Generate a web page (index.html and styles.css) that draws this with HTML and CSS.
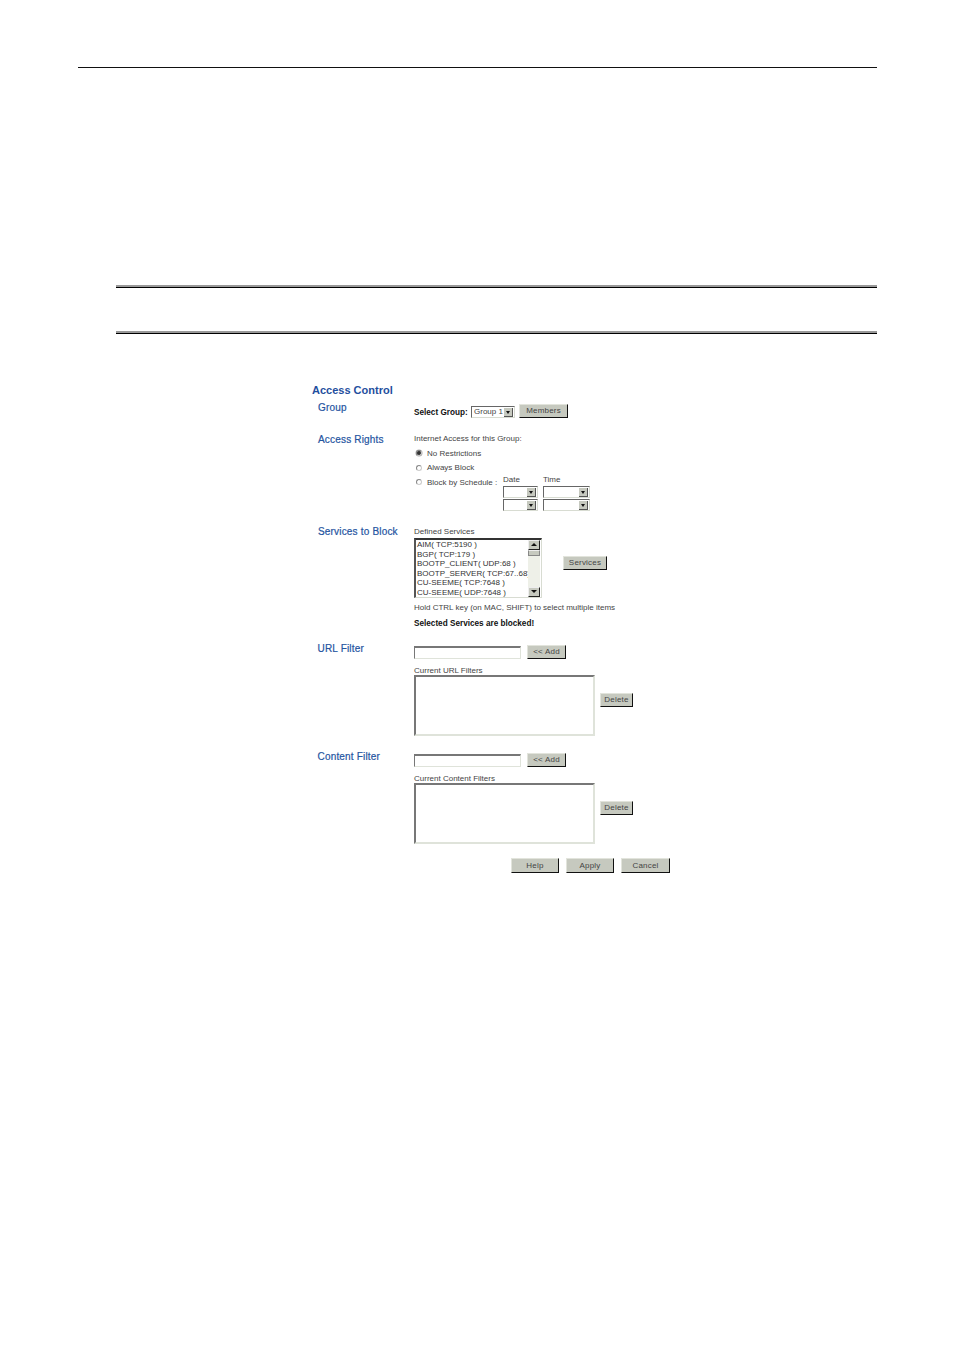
FILE: index.html
```html
<!DOCTYPE html>
<html lang="en">
<head>
<meta charset="utf-8">
<title>Access Control</title>
<link rel="stylesheet" href="styles.css">
</head>
<body>
<div class="page">
  <hr class="top-rule">
  <div class="note">
    <div class="note-rule"></div>
    <div class="note-rule"></div>
  </div>
  <main class="shot">
    <h1 class="title">Access Control</h1>

    <section class="sec sec-group">
      <h2 class="label">Group</h2>
      <div class="body group-row">
        <b class="select-label">Select Group:</b>
        <div class="select sel-group"><span>Group 1</span><i class="arrow"></i></div>
        <button class="btn btn-members">Members</button>
      </div>
    </section>

    <section class="sec sec-rights">
      <h2 class="label">Access Rights</h2>
      <div class="body">
        <p class="line intro">Internet Access for this Group:</p>
        <div class="radio-row"><i class="radio on"></i><span>No Restrictions</span></div>
        <div class="radio-row r2"><i class="radio"></i><span>Always Block</span></div>
        <div class="schedule">
          <div class="radio-row sched-label"><i class="radio"></i><span>Block by Schedule :</span></div>
          <div class="sched-col date">
            <span class="col-head">Date</span>
            <div class="select sel-date"><i class="arrow"></i></div>
            <div class="select sel-date"><i class="arrow"></i></div>
          </div>
          <div class="sched-col time">
            <span class="col-head">Time</span>
            <div class="select sel-time"><i class="arrow"></i></div>
            <div class="select sel-time"><i class="arrow"></i></div>
          </div>
        </div>
      </div>
    </section>

    <section class="sec sec-services">
      <h2 class="label">Services to Block</h2>
      <div class="body">
        <p class="line defined">Defined Services</p>
        <div class="list-row">
          <div class="listbox">
            <ul class="items">
              <li>AIM( TCP:5190 )</li>
              <li>BGP( TCP:179 )</li>
              <li>BOOTP_CLIENT( UDP:68 )</li>
              <li>BOOTP_SERVER( TCP:67..68)</li>
              <li>CU-SEEME( TCP:7648 )</li>
              <li>CU-SEEME( UDP:7648 )</li>
            </ul>
            <div class="scrollbar">
              <i class="sb-btn up"></i>
              <i class="sb-thumb"></i>
              <i class="sb-track"></i>
              <i class="sb-btn down"></i>
            </div>
          </div>
          <button class="btn btn-services">Services</button>
        </div>
        <p class="line hold">Hold CTRL key (on MAC, SHIFT) to select multiple items</p>
        <p class="line blocked"><b>Selected Services are blocked!</b></p>
      </div>
    </section>

    <section class="sec sec-filter">
      <h2 class="label">URL Filter</h2>
      <div class="body">
        <div class="add-row">
          <div class="field"></div>
          <button class="btn btn-add">&lt;&lt; Add</button>
        </div>
        <p class="line current">Current URL Filters</p>
        <div class="area-row">
          <div class="area"></div>
          <button class="btn btn-delete">Delete</button>
        </div>
      </div>
    </section>

    <section class="sec sec-filter">
      <h2 class="label">Content Filter</h2>
      <div class="body">
        <div class="add-row">
          <div class="field"></div>
          <button class="btn btn-add">&lt;&lt; Add</button>
        </div>
        <p class="line current">Current Content Filters</p>
        <div class="area-row">
          <div class="area"></div>
          <button class="btn btn-delete">Delete</button>
        </div>
      </div>
    </section>

    <div class="actions">
      <button class="btn btn-action">Help</button>
      <button class="btn btn-action">Apply</button>
      <button class="btn btn-action">Cancel</button>
    </div>
  </main>
</div>
</body>
</html>
```

FILE: styles.css
```css
* { box-sizing: border-box; }
html, body { margin: 0; padding: 0; background: #fff; }
body { font-family: "Liberation Sans", Arial, sans-serif; color: #444; font-size: 8px; }
p, h1, h2, ul { margin: 0; padding: 0; }
.page { height: 1351px; padding: 67px 77px 0 78px; overflow: hidden; }
.top-rule { margin: 0; border: 0; height: 1px; background: #111; }
.note {
  display: flex;
  flex-direction: column;
  justify-content: space-between;
  margin: 217px 0 0 38px;
  height: 49px;
}
.note-rule { height: 3px; border-top: 2px solid #999; border-bottom: 1px solid #000; }
.shot { margin: 49px 0 0 234px; width: 400px; }
.title { font-size: 11px; line-height: 14px; font-weight: 700; color: #1f4f9e; height: 17px; }
.sec { display: grid; grid-template-columns: 102px 1fr; }
.label { font-size: 10px; line-height: 14px; padding-top: 1px; font-weight: 400; color: #24549f; padding-left: 6px; letter-spacing: 0.18px; -webkit-text-stroke: 0.2px #24549f; white-space: nowrap; }
.sec-group { height: 32px; }
.sec-rights { height: 92px; }
.sec-services { height: 117px; }
.sec-filter { height: 108px; }
.sec-filter .label { padding-left: 5.5px; }
.line { line-height: 14px; white-space: nowrap; }
b { font-weight: 700; color: #111; font-size: 8.2px; }

.group-row { display: flex; align-items: flex-end; height: 18px; padding-top: 4px; }
.select-label { width: 57px; line-height: 12px; margin-bottom: -1px; white-space: nowrap; }
.select {
  display: flex;
  align-items: center;
  justify-content: flex-end;
  background: #fff;
  border-top: 1px solid #666;
  border-left: 1px solid #666;
  border-right: 1px solid #d8dcd2;
  border-bottom: 1px solid #d8dcd2;
  padding: 0 1px 0 0;
}
.select span { flex: 1; padding-left: 2px; line-height: 10px; white-space: nowrap; }
.sel-group { width: 44px; height: 12px; margin-right: 4px; }
.sel-date { width: 35px; height: 12px; }
.sel-time { width: 47px; height: 12px; }
.arrow {
  display: block;
  flex: none;
  width: 9px;
  height: 9px;
  background: #c6c9bf;
  border-right: 1px solid #555;
  border-bottom: 1px solid #555;
  position: relative;
}
.arrow::after {
  content: "";
  position: absolute;
  left: 1.5px;
  top: 3px;
  border-left: 2.5px solid transparent;
  border-right: 2.5px solid transparent;
  border-top: 3px solid #111;
}
.btn {
  display: block;
  margin: 0;
  padding: 0;
  font: 8px/1 "Liberation Sans", Arial, sans-serif;
  color: #444;
  background-color: #c6c9bf;
  background-image: radial-gradient(#b6b9ae 35%, transparent 40%);
  background-size: 2px 2px;
  border: 0;
  border-top: 1px solid #e2e4dc;
  border-left: 1px solid #e2e4dc;
  border-right: 1px solid #111;
  border-bottom: 1px solid #111;
  letter-spacing: 0.2px;
}
.btn-members { width: 49px; height: 14px; }

.intro { height: 14px; }
.radio-row { display: flex; align-items: center; height: 14px; padding-left: 2px; }
.radio-row span { margin-left: 5px; white-space: nowrap; }
.r2 { margin-top: 0.5px; }
.radio {
  display: block;
  flex: none;
  width: 6px;
  height: 6px;
  border-radius: 50%;
  border: 1px solid #888;
  border-right-color: #ccc;
  border-bottom-color: #ccc;
  background: #fff;
}
.radio.on { background: #333; box-shadow: 0 0 0 0.5px #aaa; }
.schedule { display: flex; margin-top: 0.5px; }
.sched-label { width: 89px; height: 14px; }
.sched-col { display: flex; flex-direction: column; }
.date { margin-right: 5px; }
.col-head { line-height: 10px; height: 11px; }
.sched-col .select + .select { margin-top: 1px; }

.defined { height: 13px; padding-top: 2px; line-height: 10px; margin-top: 1px; }
.list-row { display: flex; align-items: flex-start; }
.listbox {
  display: flex;
  width: 128px;
  height: 60px;
  background: #fff;
  border-top: 2px solid #333;
  border-left: 2px solid #555;
  border-right: 1px solid #d8dcd2;
  border-bottom: 1px solid #d8dcd2;
}
.items { flex: 1; list-style: none; padding: 0 0 0 1px; min-width: 0; }
.items li { line-height: 9.6px; white-space: nowrap; color: #333; }
.scrollbar { display: flex; flex-direction: column; width: 12px; margin: 0 1px 0 0; flex: none; }
.sb-btn {
  display: block;
  height: 10px;
  background: #c6c9bf;
  border-right: 1px solid #222;
  border-bottom: 1px solid #222;
  border-top: 1px solid #eee;
  border-left: 1px solid #eee;
  position: relative;
}
.sb-btn::after {
  content: "";
  position: absolute;
  left: 2px;
  top: 2px;
  border-left: 3px solid transparent;
  border-right: 3px solid transparent;
}
.sb-btn.up::after { border-bottom: 3px solid #111; }
.sb-btn.down::after { border-top: 3px solid #111; }
.sb-thumb { display: block; height: 6px; background: #c6c9bf; border: 1px solid #888; border-top-color: #eee; }
.sb-track {
  display: block;
  flex: 1;
  background-color: #eef0e8;
  background-image: radial-gradient(#c2c5ba 35%, transparent 40%);
  background-size: 2px 2px;
}
.btn-services { width: 44px; height: 14px; margin: 18px 0 0 21px; }
.hold { margin-top: 3px; }
.blocked { margin-top: 2px; }

.add-row { display: flex; align-items: flex-start; padding-top: 4px; }
.field {
  width: 107px;
  height: 13px;
  margin: 1px 6px 0 0;
  background: #fff;
  border-top: 2px solid #777;
  border-left: 1px solid #777;
  border-right: 1px solid #dfe3da;
  border-bottom: 1px solid #dfe3da;
}
.btn-add { width: 39px; height: 14px; }
.current { margin-top: 5px; line-height: 11px; height: 11px; padding-top: 1px; }
.area-row { display: flex; align-items: flex-start; }
.area {
  width: 181px;
  height: 61px;
  background: #fff;
  border-top: 2px solid #777;
  border-left: 2px solid #777;
  border-right: 2px solid #dfe3da;
  border-bottom: 2px solid #dfe3da;
}
.btn-delete { width: 33px; height: 14px; margin: 18px 0 0 5px; }

.actions { display: flex; gap: 7px; margin: 1px 0 0 199px; }
.btn-action { width: 48px; height: 15px; }
.btn-action:last-child { width: 49px; }
```
